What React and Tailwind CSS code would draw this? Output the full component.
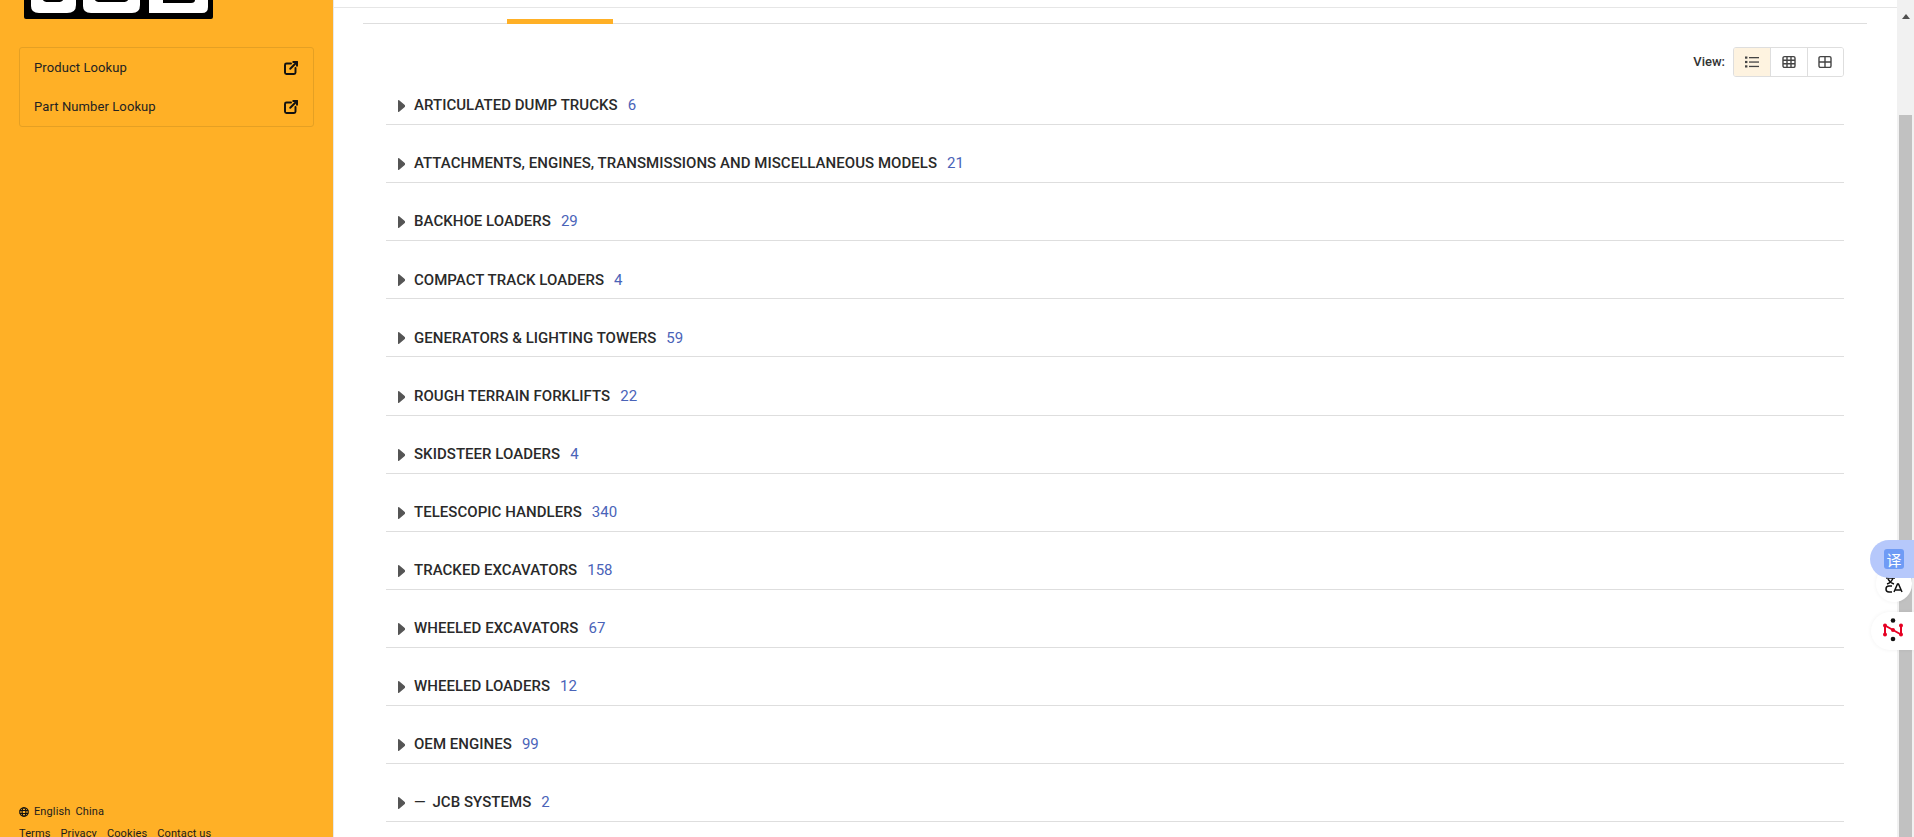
import React from 'react';

const rows = [
    { name: 'ARTICULATED DUMP TRUCKS', count: 6 },
    { name: 'ATTACHMENTS, ENGINES, TRANSMISSIONS AND MISCELLANEOUS MODELS', count: 21 },
    { name: 'BACKHOE LOADERS', count: 29 },
    { name: 'COMPACT TRACK LOADERS', count: 4 },
    { name: 'GENERATORS & LIGHTING TOWERS', count: 59 },
    { name: 'ROUGH TERRAIN FORKLIFTS', count: 22 },
    { name: 'SKIDSTEER LOADERS', count: 4 },
    { name: 'TELESCOPIC HANDLERS', count: 340 },
    { name: 'TRACKED EXCAVATORS', count: 158 },
    { name: 'WHEELED EXCAVATORS', count: 67 },
    { name: 'WHEELED LOADERS', count: 12 },
    { name: 'OEM ENGINES', count: 99 },
    { name: '—\u2009 JCB SYSTEMS', count: 2 },
];

const ExternalIcon = () => (
    <svg width="18" height="18" viewBox="0 0 24 24" fill="none" stroke="#111" strokeWidth="2.6" strokeLinecap="round" strokeLinejoin="round">
        <path d="M12 6H6a2 2 0 0 0-2 2v10a2 2 0 0 0 2 2h10a2 2 0 0 0 2-2v-6" />
        <path d="M11 13l9-9" />
        <path d="M15 4h5v5" />
    </svg>
);

const Logo = () => (
    <svg width="189" height="19" viewBox="0 0 189 19" className="block">
        <path d="M0 0H189V17a2 2 0 0 1-2 2H2a2 2 0 0 1-2-2Z" fill="#000" />
        <path d="M7 0H19Q20 2 24 2H34Q38 2 39 0H52V5Q52 13 43 13H15Q7 13 7 6Z" fill="#fff" />
        <path d="M59 0H71Q72 2 76 2H99Q103 2 104 0H116V5Q116 13 108 13H67Q59 13 59 6Z" fill="#fff" />
        <path d="M125 0H139V3H167Q171 3 171 0H184V7Q184 13 178 13H125Z" fill="#fff" />
    </svg>
);

const LookupLink = ({ label }) => (
    <div className="flex h-[39px] items-center justify-between pl-[14px] pr-[13px]">
        <span className="text-[13px] tracking-[0.1px] text-[#222]">{label}</span>
        <ExternalIcon />
    </div>
);

const Sidebar = () => (
    <aside className="flex h-full w-[334px] shrink-0 flex-col overflow-hidden border-r border-[#e8e8e8] bg-[#ffb026]">
        <div className="ml-[24px]">
            <Logo />
        </div>
        <div className="ml-[19px] mt-[28px] w-[295px] rounded-[3px] border border-[#e5a023]">
            <LookupLink label="Product Lookup" />
            <LookupLink label="Part Number Lookup" />
        </div>
        <div className="mt-auto pl-[19px] text-[11px] leading-[14px] tracking-[0.12px] text-[#1c1c1c]">
            <div className="flex items-center">
                <svg width="10" height="10" viewBox="0 0 20 20" fill="none" stroke="#111" strokeWidth="2.4">
                    <circle cx="10" cy="10" r="8.5" />
                    <ellipse cx="10" cy="10" rx="3.8" ry="8.5" />
                    <path d="M1.5 7h17M1.5 13h17" />
                </svg>
                <span className="ml-[5px]">English</span>
                <span className="ml-[5px]">China</span>
            </div>
            <div className="mb-[-4px] mt-[8px] flex gap-[10px]">
                <span>Terms</span>
                <span>Privacy</span>
                <span>Cookies</span>
                <span>Contact us</span>
            </div>
        </div>
    </aside>
);

const ViewSwitch = () => (
    <div className="flex items-center justify-end">
        <span className="mr-[8px] text-[13px] font-medium text-[#333]">View:</span>
        <div className="flex h-[30px] w-[111px] overflow-hidden rounded-[3px] border border-[#dedede]">
            <div className="flex w-[37px] items-center justify-center border-r border-[#dedede] bg-[#fef3e0] pr-[1px]">
                <svg width="14" height="14" viewBox="0 0 14 14" fill="#444">
                    <rect x="0" y="1.500" width="2.400" height="2.200" />
                    <rect x="0" y="5.900" width="2.400" height="2.200" />
                    <rect x="0" y="10.300" width="2.400" height="2.200" />
                    <rect x="4" y="2" width="10" height="1.300" />
                    <rect x="4" y="6.400" width="10" height="1.300" />
                    <rect x="4" y="10.800" width="10" height="1.300" />
                </svg>
            </div>
            <div className="flex w-[37px] items-center justify-center border-r border-[#dedede] bg-white pr-[1px]">
                <svg width="14" height="14" viewBox="0 0 14 14" fill="none" stroke="#444" strokeWidth="1.4">
                    <rect x="1" y="1.600" width="12" height="10.800" rx="1.500" />
                    <path d="M1 5.200h12M1 8.800h12M5 1.600v10.800M9 1.600v10.800" />
                </svg>
            </div>
            <div className="flex flex-1 items-center justify-center bg-white pr-[1px]">
                <svg width="14" height="14" viewBox="0 0 14 14" fill="none" stroke="#444" strokeWidth="1.4">
                    <rect x="1" y="1.600" width="12" height="10.800" rx="1.500" />
                    <path d="M1 7h12M7 1.600v10.800" />
                </svg>
            </div>
        </div>
    </div>
);

const Row = ({ name, count }) => (
    <div className="flex h-[58.1px] items-center border-b border-[#dedede] pl-[12px] pt-[20px]">
        <svg width="7" height="12" viewBox="0 0 7 12" className="mr-[9px] mt-[1px]">
            <path d="M0.7 0.7 L6.3 5.500 V6.500 L0.7 11.3 Z" fill="#555" stroke="#555" strokeWidth="1.400" strokeLinejoin="round" />
        </svg>
        <span className="text-[15px] font-medium tracking-[0.04px] text-[#2a2a2a]">{name}</span>
        <span className="ml-[10px] text-[15px] text-[#4a63b8]">{count}</span>
    </div>
);

const Scrollbar = () => (
    <div className="flex h-full w-[17px] shrink-0 flex-col items-center bg-[#f1f1f1]">
        <svg width="8" height="5" viewBox="0 0 8 5" className="mt-[14px]">
            <path d="M4 0L8 5H0Z" fill="#505050" />
        </svg>
        <div className="mt-[96px] w-[13px] flex-1 bg-[#c1c1c1]" />
    </div>
);

const FloatingTools = () => (
    <>
        <div className="absolute right-[2px] top-[565px] flex h-[37px] w-[36px] items-center justify-center rounded-full bg-white shadow-[0_0_4px_rgba(0,0,0,0.06)]">
            <svg width="18" height="20" viewBox="0 0 18 20" fill="none" stroke="#111" strokeWidth="1.500">
                <path d="M1 4h9M5.500 2v2M2 10c3-1 5-3 6-6M3 5c1 2 3 4 6 5" />
                <path d="M9 18l3.500-8h1L17 18M10 16h6" />
                <path d="M7 12H4a2.500 2.500 0 0 0 0 6h3" />
            </svg>
        </div>
        <div className="absolute right-0 top-[540px] flex h-[38px] w-[44px] items-center rounded-l-full bg-[#b6c8fb] pl-[14px]">
            <div className="flex h-[20px] w-[20px] items-center justify-center rounded-[3px] bg-[#6f9bf5] text-[15px] leading-none text-white [font-family:'Noto_Sans_CJK_SC',sans-serif]">
                译
            </div>
        </div>
        <div className="absolute right-0 top-[612px] flex h-[38px] w-[43px] items-center rounded-l-full bg-white pb-[2px] pl-[12px] shadow-[0_0_4px_rgba(0,0,0,0.06)]">
            <svg width="20" height="24" viewBox="0 0 20 24">
                <path d="M2 7.500v9M2 7.500l16 9M18 7.500v9" stroke="#e60023" strokeWidth="2" fill="none" />
                <circle cx="2" cy="7.500" r="2" fill="#e60023" />
                <circle cx="2" cy="16.500" r="2" fill="#e60023" />
                <circle cx="18" cy="7.500" r="2" fill="#e60023" />
                <circle cx="18" cy="16.500" r="2" fill="#e60023" />
                <circle cx="10" cy="12" r="2" fill="#e60023" />
                <circle cx="10" cy="2.500" r="2.300" fill="#111" />
                <circle cx="10" cy="21" r="2.300" fill="#111" />
            </svg>
        </div>
    </>
);

export default function App() {
    return (
        <div className="relative flex h-[837px] w-full overflow-hidden bg-white font-['Roboto',sans-serif]">
            <Sidebar />
            <main className="min-w-0 flex-1 overflow-hidden">
                <div className="h-[8px] border-b border-[#e6e6e6]" />
                <div className="ml-[29px] mr-[30px] h-[16px] border-b border-[#dedede] pl-[144px] pt-[11px]">
                    <div className="h-[5px] w-[106px] bg-[#ffb026]" />
                </div>
                <div className="ml-[52px] mr-[53px] mt-[23px]">
                    <ViewSwitch />
                    <div className="mt-[-10px]">
                        {rows.map((row) => (
                            <Row key={row.name} name={row.name} count={row.count} />
                        ))}
                    </div>
                </div>
            </main>
            <Scrollbar />
            <FloatingTools />
        </div>
    );
}
